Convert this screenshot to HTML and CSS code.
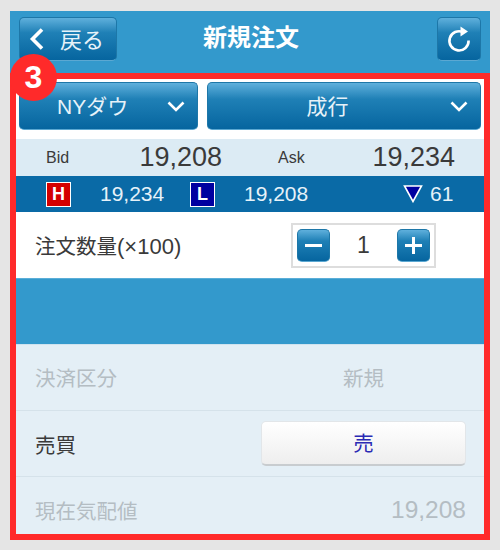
FILE: index.html
```html
<!DOCTYPE html>
<html lang="ja">
<head>
  <meta charset="UTF-8" />
  <title>新規注文</title>
  <link rel="stylesheet" href="styles.css">
</head>
<body>
  <div class="screen">
    <header class="topbar">
      <div class="btn back-btn">
        <svg class="back-icon" viewBox="0 0 16 24" aria-hidden="true"><path d="M13 2.5 L3.5 12 L13 21.5" /></svg>
        <span>戻る</span>
      </div>
      <h1 class="title">新規注文</h1>
      <div class="btn reload-btn">
        <svg class="reload-icon" viewBox="0 0 26 28" aria-hidden="true">
          <path class="arc" d="M17.2 7.2 A9.6 9.6 0 1 0 22.6 15.5" />
          <path class="tip" d="M14.5 1.5 L22 6.6 L14.5 11.5 Z" />
        </svg>
      </div>
    </header>

    <div class="selects">
      <div class="btn select select-market">
        <span>NYダウ</span>
        <svg class="chevron" viewBox="0 0 18 11" aria-hidden="true"><path d="M1.5 1.5 L9 9 L16.5 1.5" /></svg>
      </div>
      <div class="btn select select-type">
        <span>成行</span>
        <svg class="chevron" viewBox="0 0 18 11" aria-hidden="true"><path d="M1.5 1.5 L9 9 L16.5 1.5" /></svg>
      </div>
    </div>

    <div class="quote">
      <span class="quote-label bid-label">Bid</span>
      <span class="quote-price bid-price">19,208</span>
      <span class="quote-label ask-label">Ask</span>
      <span class="quote-price ask-price">19,234</span>
    </div>

    <div class="range">
      <span class="mark mark-high">H</span>
      <span class="range-val high-val">19,234</span>
      <span class="mark mark-low">L</span>
      <span class="range-val low-val">19,208</span>
      <svg class="down-icon" viewBox="0 0 20 18" aria-hidden="true"><path d="M1.5 1 H18.5 L10 16.5 Z" /></svg>
      <span class="range-val diff-val">61</span>
    </div>

    <div class="qty-row">
      <span class="label">注文数量<span class="label-unit">(×100)</span></span>
      <div class="stepper">
        <div class="btn step-btn"><span class="minus"></span></div>
        <span class="qty">1</span>
        <div class="btn step-btn"><span class="plus"></span></div>
      </div>
    </div>

    <div class="band"></div>

    <div class="row row-first">
      <span class="label muted">決済区分</span>
      <span class="center-val muted">新規</span>
    </div>
    <div class="row">
      <span class="label">売買</span>
      <div class="side-btn">売</div>
    </div>
    <div class="row row-last">
      <span class="label muted">現在気配値</span>
      <span class="price-val muted">19,208</span>
    </div>

    <div class="frame"></div>
    <div class="step-badge">3</div>
  </div>
</body>
</html>
```

FILE: styles.css
```css
* {
  box-sizing: border-box;
}
body {
  margin: 0;
  background-color: #e5e5e5;
  font-family: "Liberation Sans", "Noto Sans CJK JP", sans-serif;
  color: #3a3a3a;
}
.screen {
  position: relative;
  width: 480px;
  height: 529px;
  margin: 11px 10px 0;
  background-color: #e4eff6;
  overflow: hidden;
}

/* buttons */
.btn {
  display: flex;
  align-items: center;
  color: #e6f2f9;
  background: linear-gradient(#5fb0dc, #1f80b6 35%, #06659f);
  border: 1px solid #1d77a8;
  border-bottom-color: #5ba8d2;
  border-radius: 5px;
}
.btn > span {
  margin-bottom: 3px;
}

/* top bar */
.topbar {
  height: 62px;
  padding: 6px 9px 0;
  display: flex;
  align-items: flex-start;
  background-color: #3399cc;
}
.back-btn {
  width: 98px;
  height: 44px;
  padding-left: 9px;
  font-size: 22px;
}
.back-icon {
  width: 16px;
  height: 24px;
  margin-right: 15px;
  fill: none;
  stroke: #fff;
  stroke-width: 3.6;
}
.title {
  margin: 0 0 0 86px;
  width: 234px;
  height: 44px;
  line-height: 42px;
  color: #fff;
  font-size: 24px;
  font-weight: 700;
}
.reload-btn {
  width: 44px;
  height: 44px;
  justify-content: center;
}
.reload-icon {
  width: 26px;
  height: 28px;
}
.reload-icon .arc {
  fill: none;
  stroke: #fff;
  stroke-width: 2.6;
}
.reload-icon .tip {
  fill: #fff;
}

/* selects */
.selects {
  height: 66px;
  padding: 9px 9px 0;
  display: flex;
  gap: 9px;
  background-color: #fff;
}
.select {
  height: 48px;
  justify-content: space-between;
  padding-right: 12px;
  font-size: 21px;
}
.select-market {
  width: 179px;
  padding-left: 37px;
}
.select-type {
  width: 275px;
  padding-left: 99px;
}
.chevron {
  width: 18px;
  height: 11px;
  fill: none;
  stroke: #fff;
  stroke-width: 2.6;
}

/* quote */
.quote {
  height: 37px;
  display: grid;
  grid-template-columns: 36px 50px 126px 85px 1fr;
  align-items: center;
  background-color: #dcebf4;
}
.quote-label {
  font-size: 16px;
}
.bid-label {
  grid-column: 2;
}
.bid-price {
  grid-column: 3;
  justify-self: end;
}
.ask-label {
  grid-column: 4;
  margin-left: 56px;
}
.ask-price {
  grid-column: 5;
  justify-self: end;
  margin-right: 35px;
}
.quote-price {
  font-size: 27px;
}

/* high / low */
.range {
  height: 36px;
  display: flex;
  align-items: center;
  padding-left: 36px;
  color: #e6f2f9;
  background-color: #0a6aa6;
}
.range-val {
  font-size: 21px;
}
.mark {
  width: 25px;
  height: 25px;
  line-height: 23px;
  text-align: center;
  color: #fff;
  font-size: 18px;
  font-weight: 700;
  border: 1px solid #fff;
}
.mark-high {
  background-color: #d40000;
}
.mark-low {
  background-color: #0000a0;
}
.high-val {
  margin-left: 29px;
  width: 90px;
}
.low-val {
  margin-left: 29px;
  width: 159px;
}
.down-icon {
  width: 20px;
  height: 18px;
  fill: #0000a0;
  stroke: #fff;
  stroke-width: 1.6;
}
.diff-val {
  margin-left: 7px;
}

/* quantity */
.label {
  font-size: 20.5px;
}
.label-unit {
  font-size: 22px;
}
.qty-row {
  height: 66px;
  display: flex;
  align-items: center;
  justify-content: space-between;
  padding: 0 54px 0 25px;
  background-color: #fff;
}
.stepper {
  width: 145px;
  height: 45px;
  display: flex;
  align-items: center;
  justify-content: space-between;
  padding: 0 4px;
  border: 2px solid #ddd;
}
.step-btn {
  position: relative;
  width: 33px;
  height: 33px;
}
.qty {
  font-size: 23px;
}
.minus,
.plus {
  position: absolute;
  left: 7px;
  top: 14px;
  width: 17px;
  height: 3px;
  background-color: #fff;
}
.plus::after {
  content: "";
  position: absolute;
  left: 7px;
  top: -7px;
  width: 3px;
  height: 17px;
  background-color: #fff;
}

.band {
  height: 67px;
  background-color: #3399cc;
  border-top: 1px solid #5aaed8;
  border-bottom: 1px solid #cfe3ef;
}

/* form rows */
.row {
  height: 66px;
  display: flex;
  align-items: center;
  justify-content: space-between;
  padding: 0 24px 0 25px;
  border-bottom: 1px solid #d5e2ea;
}
.row-first {
  padding-bottom: 2px;
}
.row-last {
  border-bottom: 0;
}
.muted {
  color: #b4bdc3;
}
.center-val {
  width: 205px;
  text-align: center;
  font-size: 20.5px;
}
.side-btn {
  width: 205px;
  height: 45px;
  line-height: 43px;
  text-align: center;
  color: #2a2ab4;
  font-size: 20.5px;
  background: linear-gradient(#fff, #eee);
  border: 1px solid #e2e6e9;
  border-bottom: 2px solid #c8cccf;
  border-radius: 5px;
}
.price-val {
  font-size: 24.5px;
}

/* annotation on top of the screenshot */
.frame {
  position: absolute;
  left: 0;
  top: 62px;
  right: 0;
  bottom: 0;
  border: 6px solid #ff2a2a;
  pointer-events: none;
}
.step-badge {
  position: absolute;
  left: 0;
  top: 43px;
  width: 47px;
  height: 47px;
  line-height: 47px;
  text-align: center;
  color: #fff;
  font-size: 32px;
  font-weight: 700;
  background-color: #ff2a2a;
  border-radius: 50%;
}
```
